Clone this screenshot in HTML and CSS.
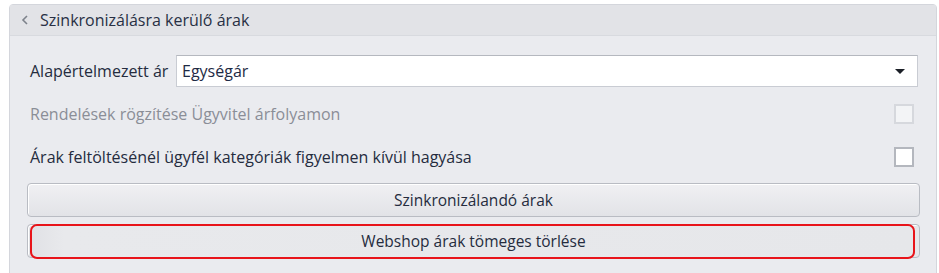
FILE: index.html
```html
<!DOCTYPE html>
<html lang="hu">
<head>
  <meta charset="UTF-8">
  <title>Szinkronizálásra kerülő árak</title>
  <link rel="stylesheet" href="styles.css">
</head>
<body>
  <div class="panel">
    <div class="panel-head">
      <svg class="chev" width="8" height="10" viewBox="0 0 8 10">
        <path d="M6 1 L2 5 L6 9" fill="none" stroke="#7d828b" stroke-width="1.6"/>
      </svg>
      <span class="title">Szinkronizálásra kerülő árak</span>
    </div>
    <div class="panel-body">
      <div class="row row-combo">
        <span class="label">Alapértelmezett ár</span>
        <div class="combo">
          <span>Egységár</span>
          <span class="arrow"></span>
        </div>
      </div>
      <div class="row row-check disabled">
        <span class="label">Rendelések rögzítése Ügyvitel árfolyamon</span>
        <span class="check"></span>
      </div>
      <div class="row row-check">
        <span class="label">Árak feltöltésénél ügyfél kategóriák figyelmen kívül hagyása</span>
        <span class="check"></span>
      </div>
      <button class="btn">Szinkronizálandó árak</button>
      <button class="btn marked">Webshop árak tömeges törlése</button>
    </div>
  </div>
</body>
</html>
```

FILE: styles.css
```css
* {
  margin: 0;
  padding: 0;
  box-sizing: border-box;
}
body {
  background: #ffffff;
  font-family: "Open Sans", "Noto Sans", sans-serif;
  font-size: 16px;
  color: #252c3e;
  padding: 4px 2px 0 9px;
  height: 273px;
  overflow: hidden;
}
.panel {
  border: 1px solid #d4d6dc;
  border-radius: 4px 4px 0 0;
  background: #eaebef;
  height: 280px;
}
.panel-head {
  height: 31px;
  display: flex;
  align-items: center;
  padding-left: 11px;
  background: #e2e3e7;
  border-bottom: 1px solid #d8dadf;
  color: #283044;
}
.chev {
  margin-right: 11px;
}
.panel-body {
  padding: 19px 16px 0 17px;
}
.row {
  display: flex;
  align-items: center;
}
.row-combo {
  height: 32px;
  margin-bottom: 17px;
}
.row-combo .label {
  width: 149px;
  padding-left: 3px;
}
.combo {
  flex: 1;
  height: 32px;
  background: #ffffff;
  border: 1px solid #c9ccd3;
  border-top-color: #b5b8bf;
  display: flex;
  align-items: center;
  justify-content: space-between;
  padding: 0 12px 0 5px;
  margin-right: 2px;
  color: #1e2a44;
}
.arrow {
  width: 0;
  height: 0;
  border-left: 5px solid transparent;
  border-right: 5px solid transparent;
  border-top: 5px solid #1b1f27;
}
.row-check {
  height: 20px;
  justify-content: space-between;
  padding: 0 6px 0 3px;
  margin-bottom: 23px;
}
.row-check + .row-check {
  margin-bottom: 16px;
}
.row-check .check {
  width: 20px;
  height: 20px;
  background: #ffffff;
  border: 2px solid #b4b7be;
}
.disabled .label {
  color: #8a8e97;
}
.disabled .check {
  background: #f3f4f6;
  border-color: #d6d8dd;
}
.btn {
  display: block;
  position: relative;
  width: 100%;
  height: 34px;
  font-family: inherit;
  font-size: 15.5px;
  color: #252c3e;
  border: 1px solid #b9bcc3;
  border-radius: 4px;
  background: linear-gradient(#f0f0f3, #e2e3e7);
  box-shadow: inset 1px 1px 0 #ffffff;
}
.btn.marked {
  margin-top: 7px;
  background: linear-gradient(90deg, #e0e1e5, #e8e9ec 4%, #e6e7ea);
}
.btn.marked::after {
  content: "";
  position: absolute;
  left: 2px;
  right: 4px;
  top: -1px;
  bottom: -2px;
  border: 2px solid #e8141a;
  border-radius: 7px;
}
```
